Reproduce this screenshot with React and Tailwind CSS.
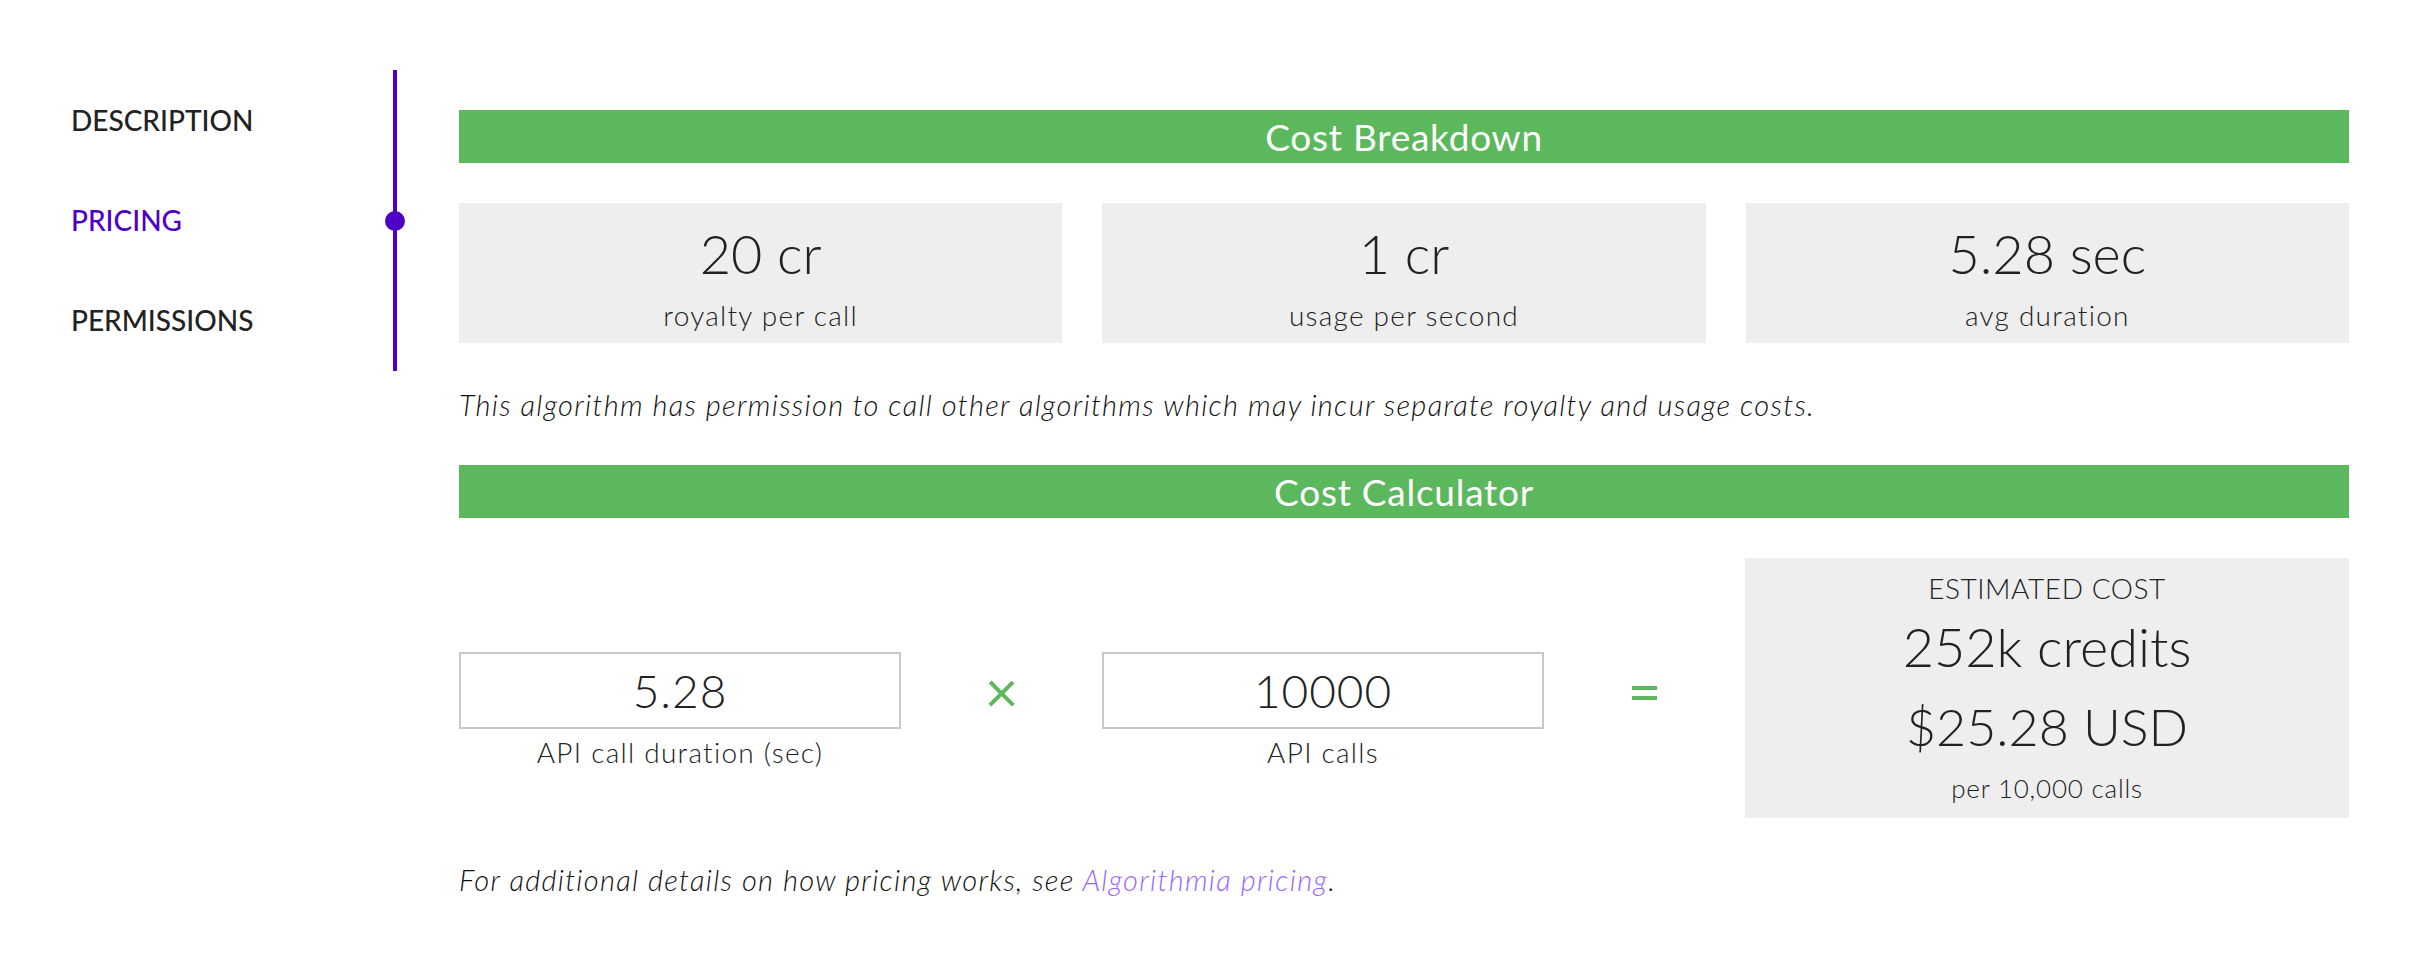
import React, { useState } from 'react';

const navItems = ['DESCRIPTION', 'PRICING', 'PERMISSIONS'];

function SectionBar({ title }) {
  return (
    <div className="h-[53px] bg-[#5cb85c] flex items-center justify-center text-white text-[37px] tracking-[0.02em] leading-none">
      {title}
    </div>
  );
}

function StatCard({ value, label }) {
  return (
    <div className="h-[140px] bg-[#eeeeee] flex flex-col items-center pt-[24px]">
      <div className="text-[54px] font-light leading-none text-[#222]">{value}</div>
      <div className="mt-[20px] text-[28px] font-light tracking-[0.045em] leading-none text-[#222]">{label}</div>
    </div>
  );
}

function CalcInput({ value, label }) {
  return (
    <div className="w-[442px] mt-[94px] flex flex-col items-center">
      <div className="w-full h-[77px] border-2 border-[#c8c8c8] flex items-center justify-center text-[46px] tracking-[0.02em] font-light text-[#222]">
        {value}
      </div>
      <div className="mt-[9px] text-[28px] font-light tracking-[0.045em] leading-none text-[#222]">{label}</div>
    </div>
  );
}

function Operator({ symbol }) {
  return (
    <div className="flex-1 h-[77px] mt-[94px] flex items-center justify-center text-[58px] leading-none text-[#5cb85c]">
      {symbol}
    </div>
  );
}

export default function App() {
  const [active, setActive] = useState('PRICING');

  return (
    <div className="min-h-screen bg-white flex pt-[70px] text-[#222]" style={{ fontFamily: 'Lato, "Open Sans", sans-serif' }}>
      {/* Side nav */}
      <aside className="w-[397px] pl-[71px] shrink-0">
        <div className="relative h-[301px] border-r-4 border-[#4f00c4] flex flex-col">
          {navItems.map((item) => (
            <button
              key={item}
              onClick={() => setActive(item)}
              className={`h-[100px] flex items-center text-left text-[28px] font-medium leading-none ${
                active === item ? 'text-[#4f00c4]' : 'text-[#222]'
              }`}
            >
              {item}
            </button>
          ))}
          <span className="absolute right-[-12px] top-[141px] w-5 h-5 rounded-full bg-[#4f00c4]" />
        </div>
      </aside>

      {/* Pricing content */}
      <main className="ml-[62px] w-[1890px] pt-[40px]">
        <SectionBar title="Cost Breakdown" />

        <div className="mt-[40px] grid grid-cols-3 gap-[40px]">
          <StatCard value="20 cr" label="royalty per call" />
          <StatCard value="1 cr" label="usage per second" />
          <StatCard value="5.28 sec" label="avg duration" />
        </div>

        <p className="mt-[47px] text-[29px] italic font-light text-[#111] tracking-[0.045em] leading-none">
          This algorithm has permission to call other algorithms which may incur separate royalty and usage costs.
        </p>

        <div className="mt-[46px]">
          <SectionBar title="Cost Calculator" />
        </div>

        <div className="mt-[40px] flex items-start">
          <CalcInput value="5.28" label="API call duration (sec)" />
          <Operator symbol="×" />
          <CalcInput value="10000" label="API calls" />
          <Operator symbol="=" />
          <div className="w-[604px] h-[260px] bg-[#eeeeee] flex flex-col items-center pt-[16px]">
            <div className="text-[28px] tracking-[0.02em] font-light leading-none">ESTIMATED COST</div>
            <div className="mt-[18px] text-[54px] font-light leading-none">252k credits</div>
            <div className="mt-[26px] text-[52px] font-light leading-none">$25.28 USD</div>
            <div className="mt-[23px] text-[26px] font-light tracking-[0.03em] leading-none">per 10,000 calls</div>
          </div>
        </div>

        <p className="mt-[47px] text-[29px] italic font-light text-[#111] tracking-[0.045em] leading-none">
          For additional details on how pricing works, see{' '}
          <a href="#" className="text-[#9966ff]">Algorithmia pricing</a>.
        </p>
      </main>
    </div>
  );
}
